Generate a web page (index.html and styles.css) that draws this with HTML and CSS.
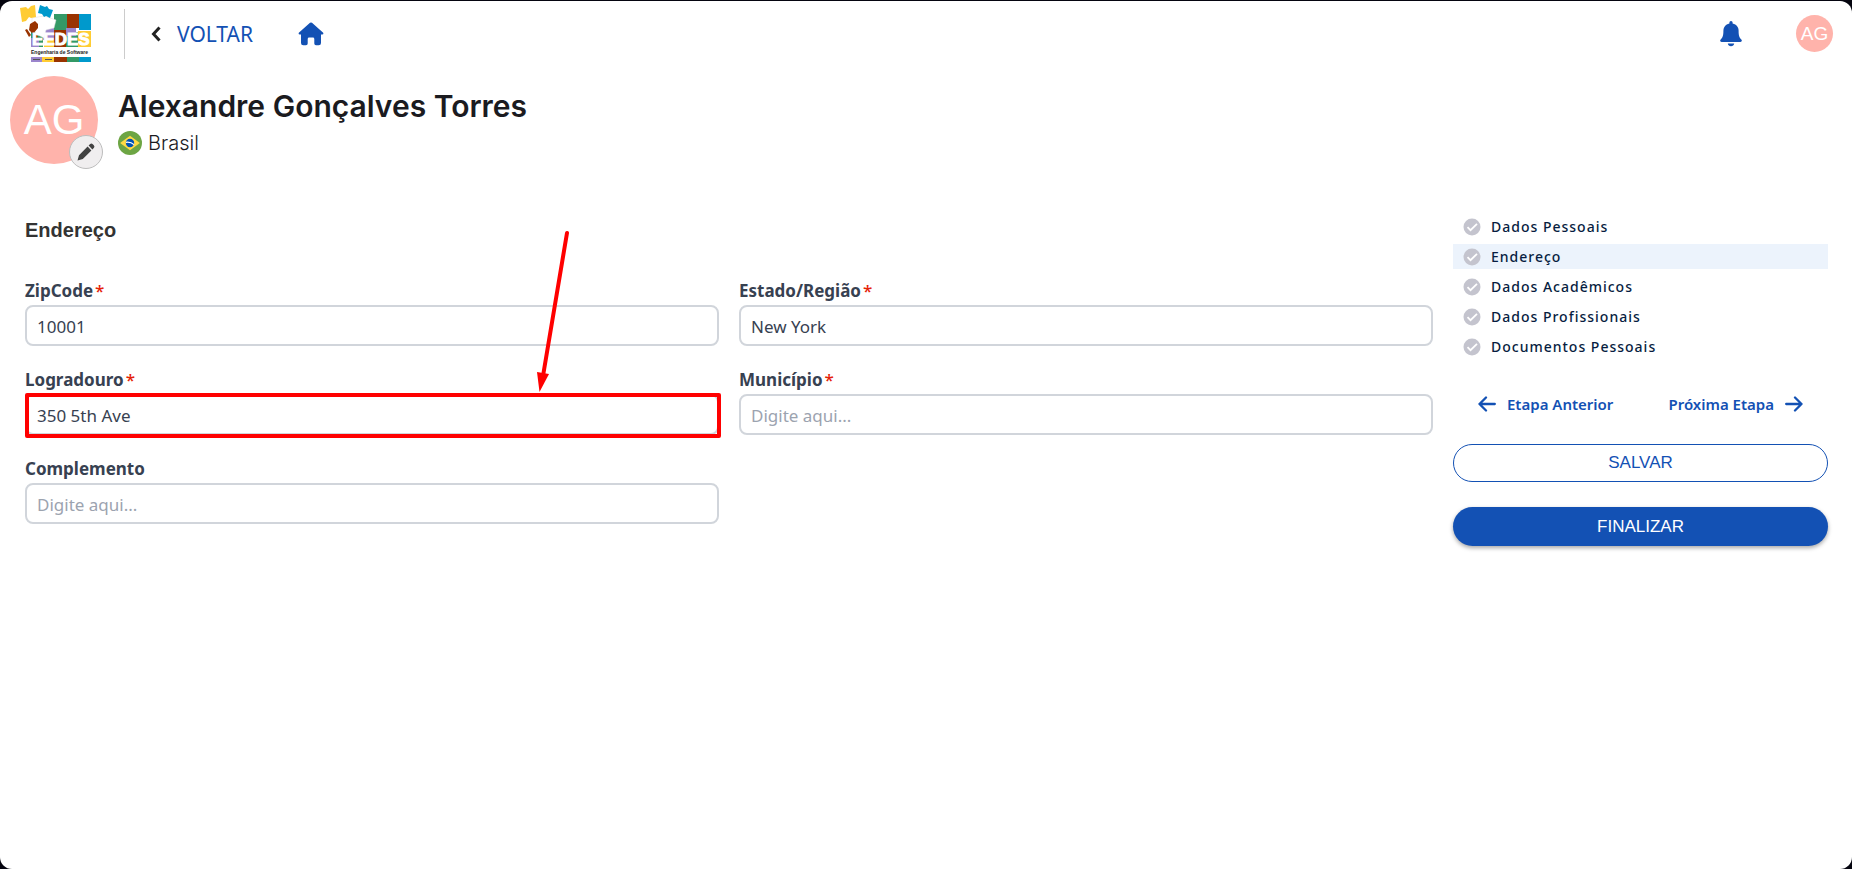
FILE: index.html
```html
<!DOCTYPE html>
<html lang="pt-BR">
<head>
<meta charset="utf-8">
<title>Alexandre Gonçalves Torres - Endereço</title>
<link rel="stylesheet" href="styles.css">
</head>
<body>
<div class="page">
  <header class="topbar">
    <a class="logo" href="#" aria-label="EEDES Engenharia de Software">
      <svg width="72" height="60" viewBox="0 0 72 60">
        <path fill="#339966" d="M34 10h13v18H34zM11 28h12v15H11zM46 28h12v15H46z"/>
        <path fill="#993300" d="M47 10h12v14H47zM34 26h12v17H34z"/>
        <path fill="#0099cc" d="M59 10h12v16H59z"/>
        <path fill="#9b85cc" d="M23 20h11v16H23zM46 24h10v8H46zM11 34h8v9h-8z"/>
        <path fill="#ffcc33" d="M58 27h13v16H58zM24 36h10v7H24z"/>
        <path fill="#fff" stroke="#ddd" stroke-width=".5" d="M12 14l12-2 12 4-2 8-8 2-2 8-8-4-4-8z"/>
        <path fill="#ffcc33" d="M0 4l6-1 2 2 3-3 4-1 1 12-5 1-2-1-3 4-4 1z"/>
        <path fill="#0099cc" d="M20 1l5 2 2-1 2 3 4 1-3 8-4-2-2 1-2-3-4-1z"/>
        <path fill="#993300" d="M10 20l5-3 3 3 0 4-5 6-4-4zM5 26l2-1 4 6-2 2zM12 32l4-3 2 4-4 2z"/>
        <text class="logo-word" x="12" y="41">EEDES</text>
        <text class="logo-sub" x="11" y="50">Engenharia de Software</text>
        <path fill="#9b85cc" d="M11 53h11v5H11z"/>
        <path fill="#ffcc33" d="M22 53h12v5H22z"/>
        <path fill="#993300" d="M34 53h13v5H34z"/>
        <path fill="#339966" d="M47 53h12v5H47z"/>
        <path fill="#0099cc" d="M59 53h12v5H59z"/>
        <path stroke="#555" stroke-width="1" d="M13 55.500h7M25 55.500h7"/>
      </svg>
    </a>
    <span class="divider"></span>
    <a class="back" href="#">
      <svg width="10" height="16" viewBox="0 0 10 16" fill="none" stroke="#222" stroke-width="3"><path d="M8.500 1.500L2.500 8l6 6.500"/></svg>
      VOLTAR
    </a>
    <a class="home" href="#" aria-label="Início">
      <svg width="26" height="24" viewBox="0 0 26 24" fill="#1351b4"><path d="M12 .8q1-.8 2 0L25.200 10.800q.8 1.400-.8 1.700H23V21q0 2.300-2.300 2.300H18q-1.700 0-1.700-1.700V17q0-1.400-1.400-1.400h-3.800q-1.400 0-1.400 1.400v4.600q0 1.700-1.700 1.700H5.300Q3 23.300 3 21v-8.500H1.600Q0 12.200.8 10.800z"/></svg>
    </a>
    <button class="bell" type="button" aria-label="Notificações">
      <svg width="22" height="26" viewBox="0 0 22 26" fill="#1351b4"><path d="M11 0q1.600 0 1.600 1.600v.8c4 .8 6 3.800 6 7.400 0 5 .8 6.800 2.700 8.600 1 1 .5 2.600-.9 2.600H1.600C.2 21-.3 19.400.7 18.400c1.900-1.800 2.700-3.600 2.700-8.600 0-3.600 2-6.600 6-7.400v-.8Q9.400 0 11 0zM7.800 22.500h6.400q-.5 2.800-3.200 2.800t-3.200-2.800z"/></svg>
    </button>
    <span class="avatar small">AG</span>
  </header>

  <section class="profile">
    <div class="photo">
      <span class="avatar large">AG</span>
      <button class="edit" type="button" aria-label="Editar foto">
        <svg width="18" height="18" viewBox="0 0 18 18" fill="#424242"><path d="M.5 17.500l1.500-5.300L10.600 3.600l3.800 3.800L5.800 16zM11.600 2.600l1.600-1.600q1.200-1 2.600.2l1 1q1.200 1.400.2 2.600l-1.600 1.600z"/></svg>
      </button>
    </div>
    <div class="who">
      <h1>Alexandre Gonçalves Torres</h1>
      <p class="country">
        <svg width="24" height="24" viewBox="0 0 24 24"><circle cx="12" cy="12" r="12" fill="#6da544"/><path fill="#ffda44" d="M12 4.700L21.900 12 12 19.300 2.100 12z"/><circle cx="12" cy="12" r="4.200" fill="#0052b4"/><path d="M8 11.300q4.800-.6 8 2.300" fill="none" stroke="#fff" stroke-width="1.200"/></svg>
        Brasil
      </p>
    </div>
  </section>

  <main class="content">
    <form class="form">
      <h2>Endereço</h2>
      <div class="fields">
        <div class="field">
          <label for="zip">ZipCode<span class="req">*</span></label>
          <input id="zip" type="text" value="10001">
        </div>
        <div class="field">
          <label for="state">Estado/Região<span class="req">*</span></label>
          <input id="state" type="text" value="New York">
        </div>
        <div class="field marked">
          <label for="street">Logradouro<span class="req">*</span></label>
          <input id="street" type="text" value="350 5th Ave">
          <span class="mark"></span>
          <svg class="arrow" width="34" height="162" viewBox="0 0 34 162"><path d="M30 3L6 146" stroke="#f00" stroke-width="4" stroke-linecap="round"/><path fill="#f00" d="M0 142l12 2-9.500 18z"/></svg>
        </div>
        <div class="field">
          <label for="city">Município<span class="req">*</span></label>
          <input id="city" type="text" placeholder="Digite aqui...">
        </div>
        <div class="field">
          <label for="extra">Complemento</label>
          <input id="extra" type="text" placeholder="Digite aqui...">
        </div>
      </div>
    </form>

    <aside class="side">
      <nav class="steps">
        <a href="#"><svg class="check" viewBox="0 0 18 18"><circle cx="9" cy="9" r="8.500" fill="#c4c4ce"/><path d="M4.500 9.200l3 3L14 5.800" fill="none" stroke="#fff" stroke-width="1.800"/></svg>Dados Pessoais</a>
        <a href="#" class="current" aria-current="step"><svg class="check" viewBox="0 0 18 18"><circle cx="9" cy="9" r="8.500" fill="#c4c4ce"/><path d="M4.500 9.200l3 3L14 5.800" fill="none" stroke="#fff" stroke-width="1.800"/></svg>Endereço</a>
        <a href="#"><svg class="check" viewBox="0 0 18 18"><circle cx="9" cy="9" r="8.500" fill="#c4c4ce"/><path d="M4.500 9.200l3 3L14 5.800" fill="none" stroke="#fff" stroke-width="1.800"/></svg>Dados Acadêmicos</a>
        <a href="#"><svg class="check" viewBox="0 0 18 18"><circle cx="9" cy="9" r="8.500" fill="#c4c4ce"/><path d="M4.500 9.200l3 3L14 5.800" fill="none" stroke="#fff" stroke-width="1.800"/></svg>Dados Profissionais</a>
        <a href="#"><svg class="check" viewBox="0 0 18 18"><circle cx="9" cy="9" r="8.500" fill="#c4c4ce"/><path d="M4.500 9.200l3 3L14 5.800" fill="none" stroke="#fff" stroke-width="1.800"/></svg>Documentos Pessoais</a>
      </nav>
      <div class="pager">
        <button type="button"><svg width="18" height="16" viewBox="0 0 18 16" fill="none" stroke="#1351b4" stroke-width="2.300" stroke-linecap="round" stroke-linejoin="round"><path d="M16.800 8H1.500M8 1.500L1.500 8 8 14.500"/></svg>Etapa Anterior</button>
        <button type="button">Próxima Etapa<svg width="18" height="16" viewBox="0 0 18 16" fill="none" stroke="#1351b4" stroke-width="2.300" stroke-linecap="round" stroke-linejoin="round"><path d="M1.200 8h15.300M10 1.500L16.500 8 10 14.500"/></svg></button>
      </div>
      <button class="btn save" type="button">SALVAR</button>
      <button class="btn finish" type="button">FINALIZAR</button>
    </aside>
  </main>
</div>
</body>
</html>
```
FILE: styles.css
```css
* { box-sizing: border-box; }

html, body { margin: 0; min-height: 100vh; }

body {
  display: flex;
  padding-top: 1px;
  background: #05050f;
  font-family: "Noto Sans", sans-serif;
}

button {
  margin: 0;
  padding: 0;
  border: 0;
  background: none;
  cursor: pointer;
}

a { text-decoration: none; }
svg { display: block; flex: none; }

.page {
  flex: 1;
  background: #fff;
  border-radius: 12px;
}

.topbar {
  display: flex;
  align-items: center;
  height: 65px;
  padding: 0 19px 0 20px;
}

.logo-word {
  font: 700 17px "Liberation Sans", sans-serif;
  fill: #fff;
  stroke: #fff;
  stroke-width: 1px;
}

.logo-sub { font: 700 5px "Liberation Sans", sans-serif; fill: #222; }

.divider {
  width: 1px;
  height: 50px;
  margin-left: 32px;
  background: #ccc;
}

.back {
  display: flex;
  align-items: center;
  gap: 16px;
  margin-left: 26px;
  color: #1351b4;
  font-size: 21px;
  font-weight: 400;
  line-height: 24px;
}

.home { margin-left: 45px; }

.bell { margin-left: auto; }

.avatar {
  display: flex;
  align-items: center;
  justify-content: center;
  border-radius: 50%;
  background: #ffb3ab;
  color: #fff;
  font-family: "Liberation Sans", sans-serif;
}

.avatar.small {
  width: 37px;
  height: 37px;
  margin-left: 54px;
  font-size: 19px;
}

.avatar.large {
  width: 88px;
  height: 88px;
  font-size: 42px;
}

.profile {
  display: flex;
  gap: 20px;
  padding: 10px 10px 0;
}

.photo { position: relative; }

.edit {
  position: absolute;
  right: -5px;
  bottom: -5px;
  display: flex;
  align-items: center;
  justify-content: center;
  width: 34px;
  height: 34px;
  border: 1px solid #bdbdbd;
  border-radius: 50%;
  background: #f0eeef;
}

.who {
  padding-top: 10px;
  color: #1b1b1f;
  font-family: Inter, sans-serif;
}

h1 {
  margin: 0;
  font-size: 30px;
  font-weight: 600;
  line-height: 40px;
}

.country {
  display: flex;
  align-items: center;
  gap: 6px;
  margin: 5px 0 0;
  font-size: 20px;
  font-weight: 300;
  line-height: 24px;
}

.content {
  display: flex;
  align-items: flex-start;
  gap: 20px;
  padding: 50px 24px 0 25px;
}

.form { flex: 1; }

h2 {
  margin: 4px 0 0;
  color: #333;
  font: 700 20px/24px "Liberation Sans", sans-serif;
}

.fields {
  display: grid;
  grid-template-columns: 1fr 1fr;
  gap: 22px 20px;
  margin-top: 37px;
}

.field {
  display: flex;
  flex-direction: column;
  gap: 2px;
}

label {
  color: #374151;
  font-size: 17px;
  font-weight: 700;
  line-height: 24px;
}

.req {
  margin-left: 2px;
  color: #e52207;
  font-weight: 500;
}

input {
  width: 100%;
  height: 41px;
  padding: 2px 10px 0;
  border: 2px solid #d1d5db;
  border-radius: 8px;
  background: #fff;
  color: #374151;
  font: 400 17px "Noto Sans", sans-serif;
}

input::placeholder { color: #9ca3af; }

.marked { position: relative; }

.mark {
  position: absolute;
  inset: auto -2px -3px 0;
  height: 45px;
  border: 4px solid #f00;
  border-radius: 2px;
  pointer-events: none;
}

.arrow {
  position: absolute;
  right: 148px;
  bottom: 43px;
}

.side { width: 375px; }

.steps {
  display: flex;
  flex-direction: column;
  gap: 5px;
}

.steps a {
  display: flex;
  align-items: center;
  gap: 10px;
  padding-left: 10px;
  color: #071d41;
  font-size: 14px;
  font-weight: 500;
  line-height: 25px;
  letter-spacing: 1px;
}

.steps .current { background: #ecf3fc; }

.check { width: 18px; height: 18px; }

.pager {
  display: flex;
  justify-content: space-between;
  margin-top: 32px;
  padding: 0 25px;
}

.pager button {
  display: flex;
  align-items: center;
  gap: 11px;
  color: #1351b4;
  font: 600 15px/26px "Noto Sans", sans-serif;
}

.btn {
  display: block;
  width: 100%;
  height: 38px;
  border-radius: 20px;
  font: 400 17px "Liberation Sans", sans-serif;
}

.save {
  margin-top: 27px;
  border: 1px solid #1351b4;
  color: #1351b4;
}

.finish {
  height: 39px;
  margin-top: 25px;
  background: #1351b4;
  color: #fff;
  box-shadow: 0 2px 4px rgba(0, 0, 0, .35);
}
```
